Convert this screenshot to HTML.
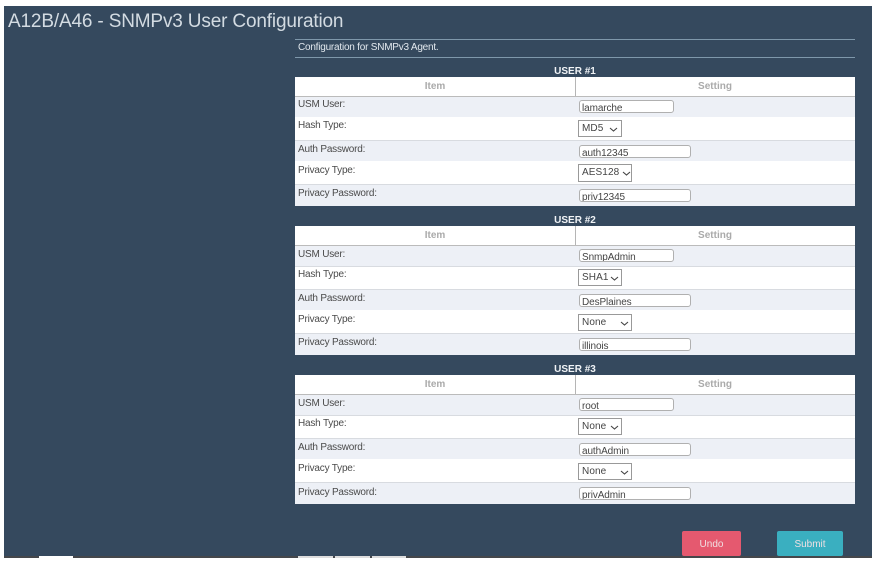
<!DOCTYPE html>
<html><head><meta charset="utf-8"><style>
html,body{margin:0;padding:0;background:#fff}
#p{position:relative;width:877px;height:564px;overflow:hidden;background:#fff;font-family:"Liberation Sans",sans-serif;filter:blur(.35px)}
#p div{position:absolute;box-sizing:border-box;white-space:nowrap}
.bg{left:4px;top:6px;width:868px;height:550px;background:#35495e}
.title{left:8px;top:10px;font-size:19px;line-height:24px;color:#d3dbe2;letter-spacing:-.16px}
.hr{left:295px;width:560px;height:1.500px;background:#7f98ab}
.cap{left:298px;top:42px;font-size:10px;line-height:12px;color:#e2e8ee;letter-spacing:-.22px}
.u{left:295px;width:560px;text-align:center;font-size:10px;font-weight:bold;line-height:12px;color:#f0f3f6;top:0}
.r{left:295px;width:560px}
.a{background:#edf0f6}.w{background:#fff}
.h,.h2{text-align:center;font-size:10px;font-weight:bold;color:#aaa;line-height:20px;width:280px}
.h{left:295px}.h2{left:575px}
.l{left:298px;font-size:10px;line-height:12px;color:#4a4a4a;letter-spacing:-.2px}
.i{left:579px;height:13px;border:1px solid #b0b0b0;border-radius:3px;background:#fff;font-size:10px;line-height:15px;padding-left:2px;color:#444;overflow:hidden;letter-spacing:-.1px}
.s{left:578px;border:1px solid #999;background:#fff;font-size:10px;color:#444;padding-left:3px;letter-spacing:.1px}
.s svg{position:absolute;top:50%;margin-top:-2px}
.vl{left:575px;width:1px;height:19px;background:#b5b5b5}
.btn{top:531px;height:25px;border-radius:2px;text-align:center;font-size:10px;line-height:27px;color:#f0dfe2}
</style></head><body><div id="p">
<div class="bg"></div>
<div class="title">A12B/A46 - SNMPv3 User Configuration</div>
<div class="hr" style="top:38.500px"></div>
<div class="cap">Configuration for SNMPv3 Agent.</div>
<div class="hr" style="top:56.500px"></div>

<!-- USER 1 -->
<div class="u" style="top:66px">USER #1</div>
<div class="r w" style="top:77px;height:19px"></div>
<div class="h" style="top:77px">Item</div><div class="h2" style="top:77px">Setting</div><div class="vl" style="top:77px"></div>
<div class="r a" style="top:96px;height:21px;border-top:1px solid #bbb"></div>
<div class="r w" style="top:117px;height:23px"></div>
<div class="r a" style="top:140px;height:21px;border-top:1px solid #d8dbe0"></div>
<div class="r w" style="top:161px;height:23px"></div>
<div class="r a" style="top:184px;height:22px;border-top:1px solid #d8dbe0"></div>
<div class="l" style="top:99px">USM User:</div>
<div class="l" style="top:120px">Hash Type:</div>
<div class="l" style="top:144px">Auth Password:</div>
<div class="l" style="top:165px">Privacy Type:</div>
<div class="l" style="top:188px">Privacy Password:</div>
<div class="i" style="top:100px;width:95px">lamarche</div>
<div class="s" style="top:120px;width:44px;height:17px;line-height:15px">MD5<svg style="left:30px" width="9" height="5"><path d="M1 1l3.500 3l3.500-3" fill="none" stroke="#444" stroke-width="1.100"/></svg></div>
<div class="i" style="top:145px;width:112px">auth12345</div>
<div class="s" style="top:164px;width:54px;height:18px;line-height:16px">AES128<svg style="left:43px" width="9" height="5"><path d="M1 1l3.500 3l3.500-3" fill="none" stroke="#444" stroke-width="1.100"/></svg></div>
<div class="i" style="top:189px;width:112px">priv12345</div>

<!-- USER 2 -->
<div class="u" style="top:215px">USER #2</div>
<div class="r w" style="top:226px;height:19px"></div>
<div class="h" style="top:226px">Item</div><div class="h2" style="top:226px">Setting</div><div class="vl" style="top:226px"></div>
<div class="r a" style="top:245px;height:21px;border-top:1px solid #bbb"></div>
<div class="r w" style="top:266px;height:23px;border-top:1px solid #d8dbe0"></div>
<div class="r a" style="top:289px;height:21px;border-top:1px solid #d8dbe0"></div>
<div class="r w" style="top:310px;height:23px"></div>
<div class="r a" style="top:333px;height:22px;border-top:1px solid #d8dbe0"></div>
<div class="l" style="top:249px">USM User:</div>
<div class="l" style="top:269px">Hash Type:</div>
<div class="l" style="top:293px">Auth Password:</div>
<div class="l" style="top:314px">Privacy Type:</div>
<div class="l" style="top:337px">Privacy Password:</div>
<div class="i" style="top:249px;width:95px">SnmpAdmin</div>
<div class="s" style="top:269px;width:44px;height:17px;line-height:15px">SHA1<svg style="left:31px" width="9" height="5"><path d="M1 1l3.500 3l3.500-3" fill="none" stroke="#444" stroke-width="1.100"/></svg></div>
<div class="i" style="top:294px;width:112px">DesPlaines</div>
<div class="s" style="top:314px;width:54px;height:17px;line-height:15px">None<svg style="left:41px" width="9" height="5"><path d="M1 1l3.500 3l3.500-3" fill="none" stroke="#444" stroke-width="1.100"/></svg></div>
<div class="i" style="top:338px;width:112px">illinois</div>

<!-- USER 3 -->
<div class="u" style="top:364px">USER #3</div>
<div class="r w" style="top:375px;height:19px"></div>
<div class="h" style="top:375px">Item</div><div class="h2" style="top:375px">Setting</div><div class="vl" style="top:375px"></div>
<div class="r a" style="top:394px;height:21px;border-top:1px solid #bbb"></div>
<div class="r w" style="top:415px;height:23px;border-top:1px solid #d8dbe0"></div>
<div class="r a" style="top:438px;height:21px;border-top:1px solid #d8dbe0"></div>
<div class="r w" style="top:459px;height:23px"></div>
<div class="r a" style="top:482px;height:22px;border-top:1px solid #d8dbe0"></div>
<div class="l" style="top:398px">USM User:</div>
<div class="l" style="top:418px">Hash Type:</div>
<div class="l" style="top:442px">Auth Password:</div>
<div class="l" style="top:463px">Privacy Type:</div>
<div class="l" style="top:487px">Privacy Password:</div>
<div class="i" style="top:398px;width:95px">root</div>
<div class="s" style="top:418px;width:44px;height:17px;line-height:15px">None<svg style="left:31px" width="9" height="5"><path d="M1 1l3.500 3l3.500-3" fill="none" stroke="#444" stroke-width="1.100"/></svg></div>
<div class="i" style="top:443px;width:112px">authAdmin</div>
<div class="s" style="top:463px;width:54px;height:17px;line-height:15px">None<svg style="left:41px" width="9" height="5"><path d="M1 1l3.500 3l3.500-3" fill="none" stroke="#444" stroke-width="1.100"/></svg></div>
<div class="i" style="top:487px;width:112px">privAdmin</div>

<!-- Buttons -->
<div class="btn" style="left:682px;width:59px;background:#e5596f">Undo</div>
<div class="btn" style="left:777px;width:66px;background:#3aafc0">Submit</div>

<!-- Bottom strip -->
<div style="left:4px;top:556px;width:868px;height:2px;background:#45474b"></div>
<div style="left:39px;top:556px;width:34px;height:2px;background:#fff"></div>
<div style="left:298px;top:556px;width:35px;height:2px;background:#ddd"></div>
<div style="left:335px;top:556px;width:35px;height:2px;background:#ddd"></div>
<div style="left:372px;top:556px;width:34px;height:2px;background:#ddd"></div>
</div></body></html>
